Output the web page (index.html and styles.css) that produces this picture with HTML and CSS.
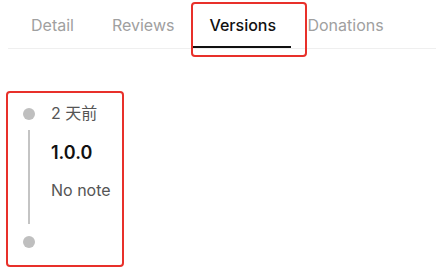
FILE: index.html
```html
<!DOCTYPE html>
<html>
<head>
<meta charset="utf-8">
<link rel="stylesheet" href="styles.css">
</head>
<body>
<nav class="tabs">
  <div class="tab tab-detail">Detail</div>
  <div class="tab">Reviews</div>
  <div class="tab tab-active">Versions</div>
  <div class="tab">Donations</div>
</nav>
<section class="timeline-box">
  <div class="rail">
    <span class="dot"></span>
    <span class="rail-line"></span>
    <span class="dot dot-end"></span>
  </div>
  <div class="entry">
    <div class="meta">2 天前</div>
    <div class="version">1.0.0</div>
    <div class="note">No note</div>
  </div>
</section>
</body>
</html>
```

FILE: styles.css
```css
html, body {
  margin: 0;
  padding: 0;
  background: #ffffff;
}
body {
  font-family: Inter, "Noto Sans CJK SC", sans-serif;
  color: #222;
}
.tabs {
  display: flex;
  height: 48px;
  margin-left: 8px;
  padding-left: 7px;
  border-bottom: 1px solid #efefef;
}
.tab {
  box-sizing: border-box;
  height: 48px;
  padding: 15px 16px 0;
  font-size: 16px;
  line-height: 20px;
  color: #a0a0a0;
  white-space: nowrap;
  flex: none;
}
.tab-detail {
  margin-right: 6px;
}
.tab-active {
  position: relative;
  width: 98px;
  margin-left: 3px;
  margin-right: 0;
  color: #111;
  font-weight: 500;
  border-bottom: 2px solid #111;
}
.tab-active::after {
  content: "";
  position: absolute;
  left: -2px;
  right: -16px;
  top: 2px;
  bottom: -11px;
  border: 2px solid #e8302a;
  border-radius: 4px;
}
.timeline-box {
  display: flex;
  box-sizing: border-box;
  margin: 42px 0 0 6px;
  width: 118px;
  height: 176px;
  border: 2px solid #e8302a;
  border-radius: 4px;
}
.rail {
  display: flex;
  flex-direction: column;
  align-items: center;
  width: 42px;
  padding-top: 15px;
}
.dot {
  width: 12px;
  height: 12px;
  border-radius: 50%;
  background: #bfbfbf;
}
.rail-line {
  width: 2px;
  height: 94px;
  margin-top: 10px;
  background: #c4c4c4;
}
.dot-end {
  margin-top: 12px;
}
.entry {
  padding-top: 10px;
  padding-left: 1px;
}
.meta {
  font-size: 16px;
  line-height: 20px;
  color: #555;
}
.version {
  margin-top: 18px;
  font-size: 18px;
  line-height: 24px;
  font-weight: 600;
  color: #111;
}
.note {
  margin-top: 15px;
  font-size: 16px;
  line-height: 20px;
  color: #555;
}
```
